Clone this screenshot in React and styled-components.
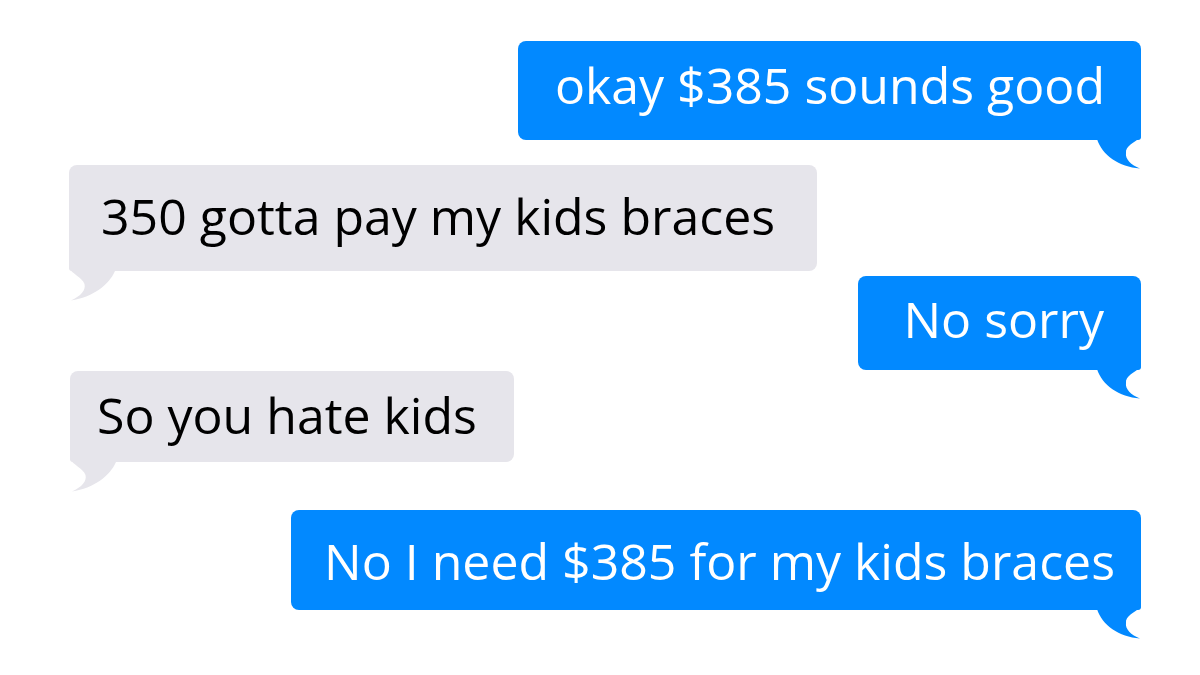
import React from "react";
import styled, { createGlobalStyle, css } from "styled-components";

const BLUE = "#0289ff";
const GRAY = "#e6e5eb";

const Global = createGlobalStyle`
  html, body { margin: 0; padding: 0; background: #ffffff; }
  body { font-family: "Open Sans", "Noto Sans", sans-serif; }
`;

const Page = styled.div`
  width: 1200px;
  height: 675px;
  box-sizing: border-box;
  padding: 41px 59px 0 69px;
  display: flex;
  flex-direction: column;
  background: #ffffff;
  overflow: hidden;
`;

const Row = styled.div`
  display: flex;
  justify-content: ${(p) => (p.$sent ? "flex-end" : "flex-start")};
  margin-top: ${(p) => p.$mt || 0}px;
  padding-left: ${(p) => p.$shift || 0}px;
`;

const Bubble = styled.div`
  position: relative;
  font-size: 50px;
  line-height: 51px;
  white-space: nowrap;
  border-radius: 8px;
  padding: ${(p) => `${p.$pad[0]}px ${p.$pad[1]}px ${p.$pad[2]}px ${p.$pad[3]}px`};
  ${(p) =>
    p.$sent
      ? css`
          background: ${BLUE};
          color: #ffffff;
          border-bottom-right-radius: 3px;
        `
      : css`
          background: ${GRAY};
          color: #000000;
          border-bottom-left-radius: 3px;
        `}
`;

const TailSvg = styled.svg`
  position: absolute;
  top: calc(100% - 8px);
  width: 46px;
  height: 38px;
  ${(p) => (p.$sent ? "right: 0;" : "left: 0;")}
`;

function Tail({ sent }) {
  if (sent) {
    return (
      <TailSvg $sent viewBox="0 -8 46 38" aria-hidden="true">
        <path
          d="M2,-8 L46,-8 L46,-3 C40,2 30,6 31,13 C30,19 36,25 45,28.5 C24,27 7,15 2,-1 Z"
          fill={BLUE}
        />
      </TailSvg>
    );
  }
  return (
    <TailSvg viewBox="0 -8 46 38" aria-hidden="true">
      <path
        d="M0,-8 L46,-8 L46,0 C40,14 24,26 2,29.5 C12,25 17,19 15.5,13 C13,6 3,3 0,-3 Z"
        fill={GRAY}
      />
    </TailSvg>
  );
}

const messages = [
  { text: "okay $385 sounds good", sent: true, mt: 0, pad: [19, 36, 29, 37] },
  { text: "350 gotta pay my kids braces", sent: false, mt: 25, pad: [26, 42, 29, 32] },
  { text: "No sorry", sent: true, mt: 5, pad: [18, 37, 25, 45] },
  { text: "So you hate kids", sent: false, mt: 1, pad: [19, 37, 21, 27], shift: 1 },
  { text: "No I need $385 for my kids braces", sent: true, mt: 48, pad: [26, 26, 23, 33] },
];

export default function App() {
  return (
    <>
      <Global />
      <Page>
        {messages.map((m, i) => (
          <Row key={i} $sent={m.sent} $mt={m.mt} $shift={m.shift}>
            <Bubble $sent={m.sent} $pad={m.pad}>
              {m.text}
              <Tail sent={m.sent} />
            </Bubble>
          </Row>
        ))}
      </Page>
    </>
  );
}
